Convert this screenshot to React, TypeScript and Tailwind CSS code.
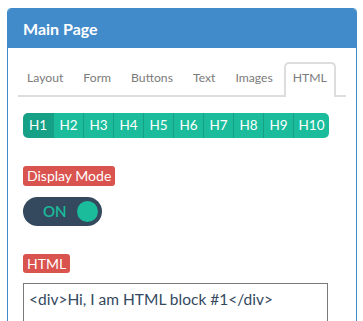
const tabs = ['Layout', 'Form', 'Buttons', 'Text', 'Images', 'HTML'];
const headings = ['H1', 'H2', 'H3', 'H4', 'H5', 'H6', 'H7', 'H8', 'H9', 'H10'];

export default function App() {
  return (
    <div className="bg-white pl-[7px] pt-[8px] font-['Lato','Noto_Sans',sans-serif]">
      <div className="w-[350px] overflow-hidden rounded-t-[4px] border border-[#428bca] bg-white">
        {/* header */}
        <div className="flex h-[39px] items-center bg-[#428bca] px-[15px]">
          <h3 className="text-[16px] font-bold text-white">Main Page</h3>
        </div>

        <div className="px-[10px] pt-[14px] pb-[40px]">
          {/* tabs */}
          <ul className="flex border-b-2 border-[#dddddd]">
            {tabs.map((t) => {
              const active = t === 'HTML';
              return (
                <li
                  key={t}
                  className={
                    active
                      ? '-mb-[2px] mr-[2px] rounded-t-[5px] border-2 border-b-0 border-[#dddddd] bg-white px-[7px] pt-[4px] pb-[7px] text-[12.2px] leading-[20px] text-[#7b7b7b]'
                      : 'mr-[2px] border-2 border-transparent px-[7px] pt-[4px] pb-[5px] text-[12.2px] leading-[20px] text-[#7b7b7b]'
                  }
                >
                  {t}
                </li>
              );
            })}
          </ul>

          <div className="px-[5px]">
            {/* heading buttons */}
            <div className="mt-[16px] flex w-fit overflow-hidden rounded-[5px]">
              {headings.map((h, i) => (
                <div
                  key={h}
                  className={
                    i === 0
                      ? 'flex h-[25px] w-[30px] items-center justify-center bg-[#16a085] text-[13.5px] text-white'
                      : i === 9
                        ? 'flex h-[25px] w-[36px] items-center justify-center border-l border-[#16a085] bg-[#1abc9c] text-[13.5px] text-white'
                        : 'flex h-[25px] w-[30px] items-center justify-center border-l border-[#16a085] bg-[#1abc9c] text-[13.5px] text-white'
                  }
                >
                  {h}
                </div>
              ))}
            </div>

            {/* display mode */}
            <div className="mt-[28px] inline-flex h-[20px] items-center rounded-[3px] bg-[#d9534f] px-[4px] text-[14px] leading-none text-white">
              Display Mode
            </div>
            <div className="mt-[10px] flex h-[29px] w-[79px] items-center justify-between rounded-full bg-[#34495e] pr-[4px] pl-[20px]">
              <span className="text-[15px] font-semibold text-[#1abc9c]">ON</span>
              <span className="h-[21px] w-[21px] rounded-full bg-[#1abc9c]" />
            </div>

            {/* html */}
            <div className="mt-[28px] inline-flex h-[19px] items-center rounded-[3px] bg-[#d9534f] px-[4px] text-[14px] leading-none text-white">
              HTML
            </div>
            <textarea
              readOnly
              defaultValue="<div>Hi, I am HTML block #1</div>"
              className="mt-[8px] block h-[90px] w-[305px] resize-none border border-[#7a7a7a] px-[5px] py-[4px] text-[15.5px] leading-[22px] text-[#34495e] outline-none"
            />
          </div>
        </div>
      </div>
    </div>
  );
}
